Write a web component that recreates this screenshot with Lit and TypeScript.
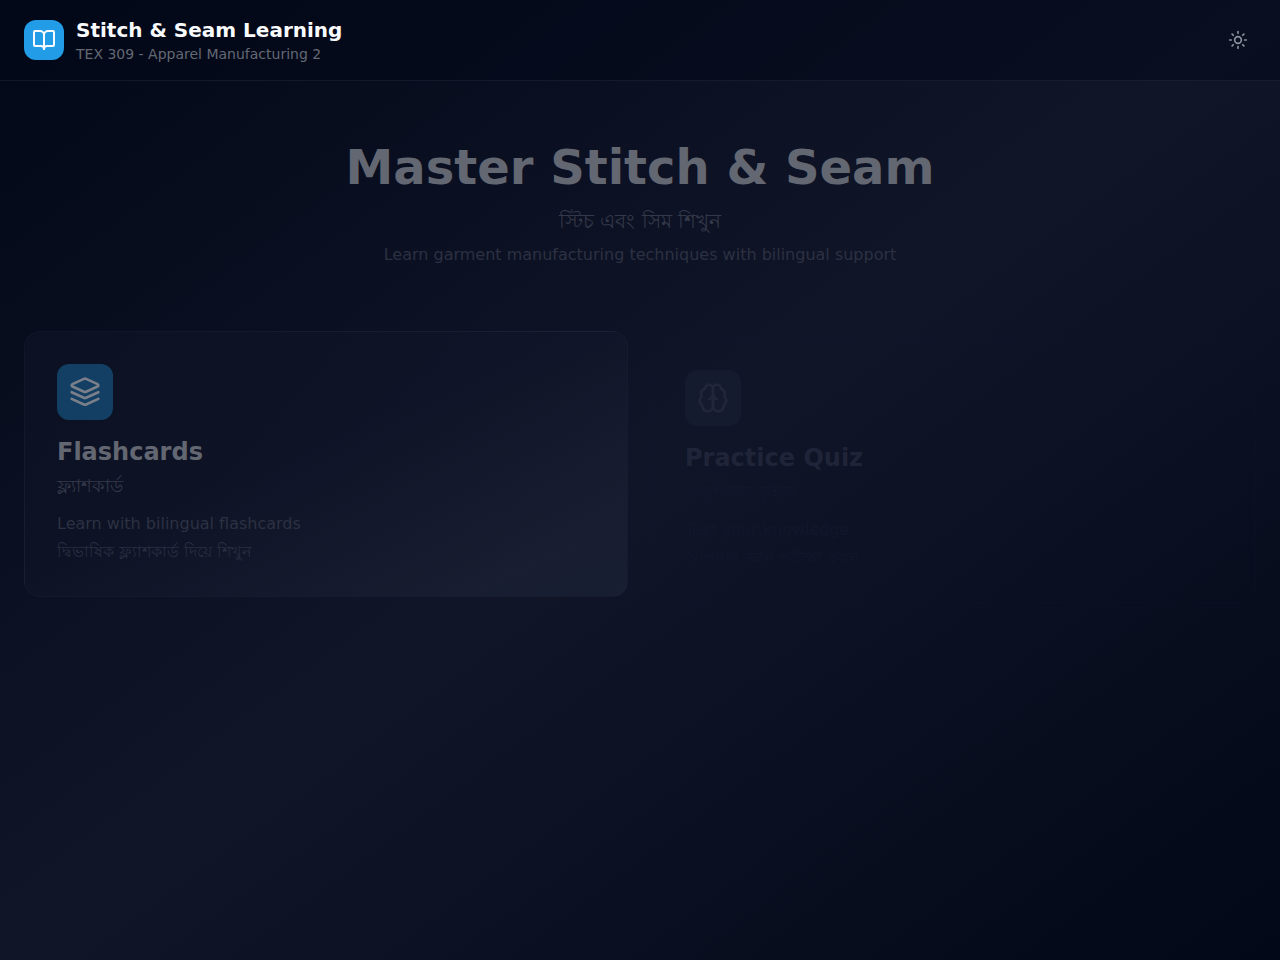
import { LitElement, html, css, svg } from "lit";
import { customElement } from "lit/decorators.js";

const book = svg`<path d="M12 7v14"/><path d="M3 18a1 1 0 0 1-1-1V4a1 1 0 0 1 1-1h5a4 4 0 0 1 4 4 4 4 0 0 1 4-4h5a1 1 0 0 1 1 1v13a1 1 0 0 1-1 1h-6a3 3 0 0 0-3 3 3 3 0 0 0-3-3z"/>`;
const sun = svg`<circle cx="12" cy="12" r="4"/><path d="M12 2v2"/><path d="M12 20v2"/><path d="m4.93 4.93 1.41 1.41"/><path d="m17.66 17.66 1.41 1.41"/><path d="M2 12h2"/><path d="M20 12h2"/><path d="m6.34 17.66-1.41 1.41"/><path d="m19.07 4.93-1.41 1.41"/>`;
const layers = svg`<path d="m12.83 2.18a2 2 0 0 0-1.66 0L2.6 6.08a1 1 0 0 0 0 1.83l8.58 3.91a2 2 0 0 0 1.66 0l8.58-3.9a1 1 0 0 0 0-1.83Z"/><path d="m22 12.18-9.17 4.16a2 2 0 0 1-1.66 0L2 12.18"/><path d="m22 17.18-9.17 4.16a2 2 0 0 1-1.66 0L2 17.18"/>`;
const brain = svg`<path d="M12 5a3 3 0 1 0-5.997.125 4 4 0 0 0-2.526 5.77 4 4 0 0 0 .556 6.588A4 4 0 1 0 12 18Z"/><path d="M12 5a3 3 0 1 1 5.997.125 4 4 0 0 1 2.526 5.77 4 4 0 0 1-.556 6.588A4 4 0 1 1 12 18Z"/><path d="M15 13a4.5 4.5 0 0 1-3-4 4.5 4.5 0 0 1-3 4"/>`;

const icon = (shape: unknown, size: number) => html`<svg
  width=${size} height=${size} viewBox="0 0 24 24" fill="none" stroke="currentColor"
  stroke-width="2" stroke-linecap="round" stroke-linejoin="round" aria-hidden="true">${shape}</svg>`;

@customElement("app-root")
export class AppRoot extends LitElement {
  static styles = css`
    :host {
      display: block;
      min-height: 100vh;
      box-sizing: border-box;
      color: #f8fafc;
      background: linear-gradient(to bottom right, #030818, #101528 50%, #030818);
      font-family: "DejaVu Sans", sans-serif;
      font-size: 16px;
      line-height: 24px;
    }
    h1, h2, h3, p { margin: 0; }
    svg { display: block; }
    .header {
      background: rgba(2, 8, 23, 0.5);
      border-bottom: 1px solid rgba(148, 163, 184, 0.1);
    }
    .bar {
      display: flex;
      align-items: center;
      justify-content: space-between;
      max-width: 1280px;
      margin: 0 auto;
      padding: 16px 24px;
      box-sizing: border-box;
    }
    .brand { display: flex; align-items: center; gap: 12px; }
    .logo {
      display: grid;
      place-items: center;
      width: 40px;
      height: 40px;
      border-radius: 12px;
      background: #229ce6;
    }
    .name { font-size: 20px; line-height: 28px; font-weight: 700; }
    .course { font-size: 14px; line-height: 20px; color: #636874; }
    .toggle {
      display: grid;
      place-items: center;
      width: 36px;
      height: 36px;
      padding: 0;
      border: 0;
      border-radius: 10px;
      background: none;
      color: #8d919b;
      cursor: pointer;
    }
    .main {
      max-width: 1280px;
      margin: 0 auto;
      padding: 62px 24px 48px;
      box-sizing: border-box;
    }
    .hero { text-align: center; margin-bottom: 64px; }
    .title { font-size: 48px; line-height: 48px; font-weight: 700; color: #636772; }
    .subtitle { margin-top: 16px; font-size: 20px; line-height: 28px; color: #343949; }
    .lead { margin-top: 8px; color: #2c3142; }
    .cards {
      display: grid;
      grid-template-columns: repeat(auto-fit, minmax(320px, 1fr));
      gap: 24px;
    }
    .card {
      display: block;
      padding: 32px;
      border: 1px solid rgba(148, 163, 184, 0.04);
      border-radius: 16px;
      color: inherit;
      text-decoration: none;
      background: linear-gradient(to bottom right, rgba(148, 163, 184, 0.03), rgba(148, 163, 184, 0.02) 45%, rgba(148, 163, 184, 0.08));
    }
    .tile {
      display: grid;
      place-items: center;
      width: 56px;
      height: 56px;
      margin-bottom: 16px;
      border-radius: 12px;
      background: #123f63;
      color: #7b7f89;
    }
    .heading { font-size: 24px; line-height: 32px; font-weight: 700; color: #636772; }
    .bangla { margin-top: 4px; font-size: 18px; line-height: 28px; color: #343949; }
    .about { margin-top: 12px; color: #2c3142; }
    .about-bangla { margin-top: 4px; color: #292e40; }
    .entering {
      transform: translateY(6px);
      border-color: rgba(148, 163, 184, 0.015);
      background: none;
    }
    .entering .tile { background: #151b2e; color: #21263a; }
    .entering .heading { color: #1f2438; }
    .entering .bangla,
    .entering .about,
    .entering .about-bangla { color: #12172a; }
  `;

  render() {
    return html`
      <header class="header">
        <div class="bar">
          <div class="brand">
            <div class="logo">${icon(book, 24)}</div>
            <div>
              <h1 class="name">Stitch &amp; Seam Learning</h1>
              <p class="course">TEX 309 - Apparel Manufacturing 2</p>
            </div>
          </div>
          <button class="toggle" type="button" aria-label="Toggle theme">${icon(sun, 20)}</button>
        </div>
      </header>
      <main class="main">
        <section class="hero">
          <h2 class="title">Master Stitch &amp; Seam</h2>
          <p class="subtitle">স্টিচ এবং সিম শিখুন</p>
          <p class="lead">Learn garment manufacturing techniques with bilingual support</p>
        </section>
        <section class="cards">
          <a class="card" href="#flashcards">
            <div class="tile">${icon(layers, 32)}</div>
            <h3 class="heading">Flashcards</h3>
            <p class="bangla">ফ্ল্যাশকার্ড</p>
            <p class="about">Learn with bilingual flashcards</p>
            <p class="about-bangla">দ্বিভাষিক ফ্ল্যাশকার্ড দিয়ে শিখুন</p>
          </a>
          <a class="card entering" href="#quiz">
            <div class="tile">${icon(brain, 32)}</div>
            <h3 class="heading">Practice Quiz</h3>
            <p class="bangla">অনুশীলন কুইজ</p>
            <p class="about">Test your knowledge</p>
            <p class="about-bangla">আপনার জ্ঞান পরীক্ষা করুন</p>
          </a>
        </section>
      </main>
    `;
  }
}
